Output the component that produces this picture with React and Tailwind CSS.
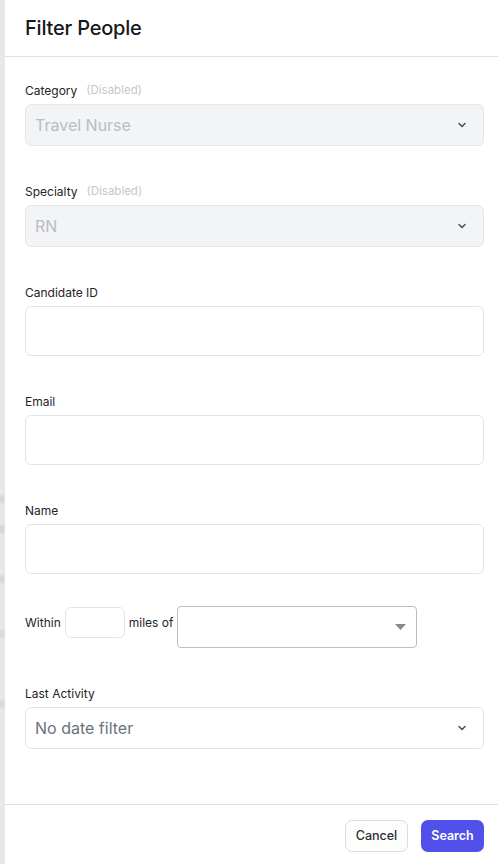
import { ChevronDown } from 'lucide-react'

const font = { fontFamily: 'Inter, "Noto Sans", sans-serif' }

// Select-like box with a small bold chevron on the right.
function SelectBox({ value, disabled }) {
  return (
    <div
      className={`flex h-[42px] items-center justify-between rounded-md border px-[9px] pr-[15px] ${
        disabled
          ? 'border-[#e5e7eb] bg-[#f3f4f6] text-[#b9bdc5]'
          : 'border-[#e2e4e8] bg-white text-[#6b7280]'
      }`}
    >
      <span className="text-base">{value}</span>
      <ChevronDown size={12} strokeWidth={3.2} className="text-[#4b5563]" />
    </div>
  )
}

function Field({ label, disabled, children }) {
  return (
    <div className="mb-[38px]">
      <div className="mb-[6px] flex h-[15px] items-center gap-[9px]">
        <span className="text-xs text-[#1f2328]">{label}</span>
        {disabled && <span className="text-[11.5px] text-[#c3c7ce]">(Disabled)</span>}
      </div>
      {children}
    </div>
  )
}

function TextBox() {
  return <div className="h-[50px] rounded-md border border-[#e2e4e8] bg-white" />
}

export default function App() {
  return (
    <div className="flex h-screen w-full bg-white" style={font}>
      {/* page behind the drawer */}
      <div className="relative w-[5px] shrink-0 bg-[#e7e8eb]">
        <div className="absolute left-0 top-[495px] h-[8px] w-[4px] bg-[#d2d3d6] blur-[1px]" />
        <div className="absolute left-0 top-[525px] h-[8px] w-[4px] bg-[#d2d3d6] blur-[1px]" />
        <div className="absolute left-0 top-[575px] h-[8px] w-[4px] bg-[#d2d3d6] blur-[1px]" />
        <div className="absolute left-0 top-[630px] h-[8px] w-[4px] bg-[#d6d7da] blur-[1px]" />
        <div className="absolute left-0 top-[700px] h-[8px] w-[4px] bg-[#d6d7da] blur-[1px]" />
      </div>

      <div className="flex min-w-0 flex-1 flex-col">
        <div className="flex h-[57px] shrink-0 items-center border-b border-[#dcdfe3] pl-5">
          <h2 className="text-[20px] font-medium tracking-[-0.2px] text-[#16181b]">Filter People</h2>
        </div>

        <div className="flex-1 overflow-hidden pl-5 pr-[14px] pt-[26px]">
          <Field label="Category" disabled>
            <SelectBox value="Travel Nurse" disabled />
          </Field>
          <Field label="Specialty" disabled>
            <SelectBox value="RN" disabled />
          </Field>
          <Field label="Candidate ID">
            <TextBox />
          </Field>
          <Field label="Email">
            <TextBox />
          </Field>
          <Field label="Name">
            <TextBox />
          </Field>

          <div className="-mt-[6px] mb-[38px] flex items-start text-xs text-[#1f2328]">
            <span className="mt-[1px] leading-[31px]">Within</span>
            <div className="ml-[4px] mt-[1px] h-[31px] w-[60px] rounded-md border border-[#e2e4e8]" />
            <span className="ml-[4px] mt-[1px] leading-[31px]">miles of</span>
            <div className="ml-[4px] flex h-[42px] w-[240px] items-center justify-end rounded border border-[#bdbdbd] pr-[10px]">
              <svg width="11" height="6" viewBox="0 0 11 6">
                <path d="M0 0h11L5.5 6z" fill="#8a8a8a" />
              </svg>
            </div>
          </div>

          <Field label="Last Activity">
            <SelectBox value="No date filter" />
          </Field>
        </div>

        <div className="flex h-[60px] shrink-0 items-start justify-end gap-[13px] border-t border-[#dcdfe3] pr-[14px] pt-[15px]">
          <button className="h-[32px] w-[63px] rounded-[7px] border border-[#d9dbdf] bg-[#fdfdfc] text-[12.5px] font-medium text-[#2b2f36]">
            Cancel
          </button>
          <button className="h-[32px] w-[63px] rounded-[7px] bg-[#5150ea] text-[12.5px] font-semibold text-white">
            Search
          </button>
        </div>
      </div>
    </div>
  )
}
